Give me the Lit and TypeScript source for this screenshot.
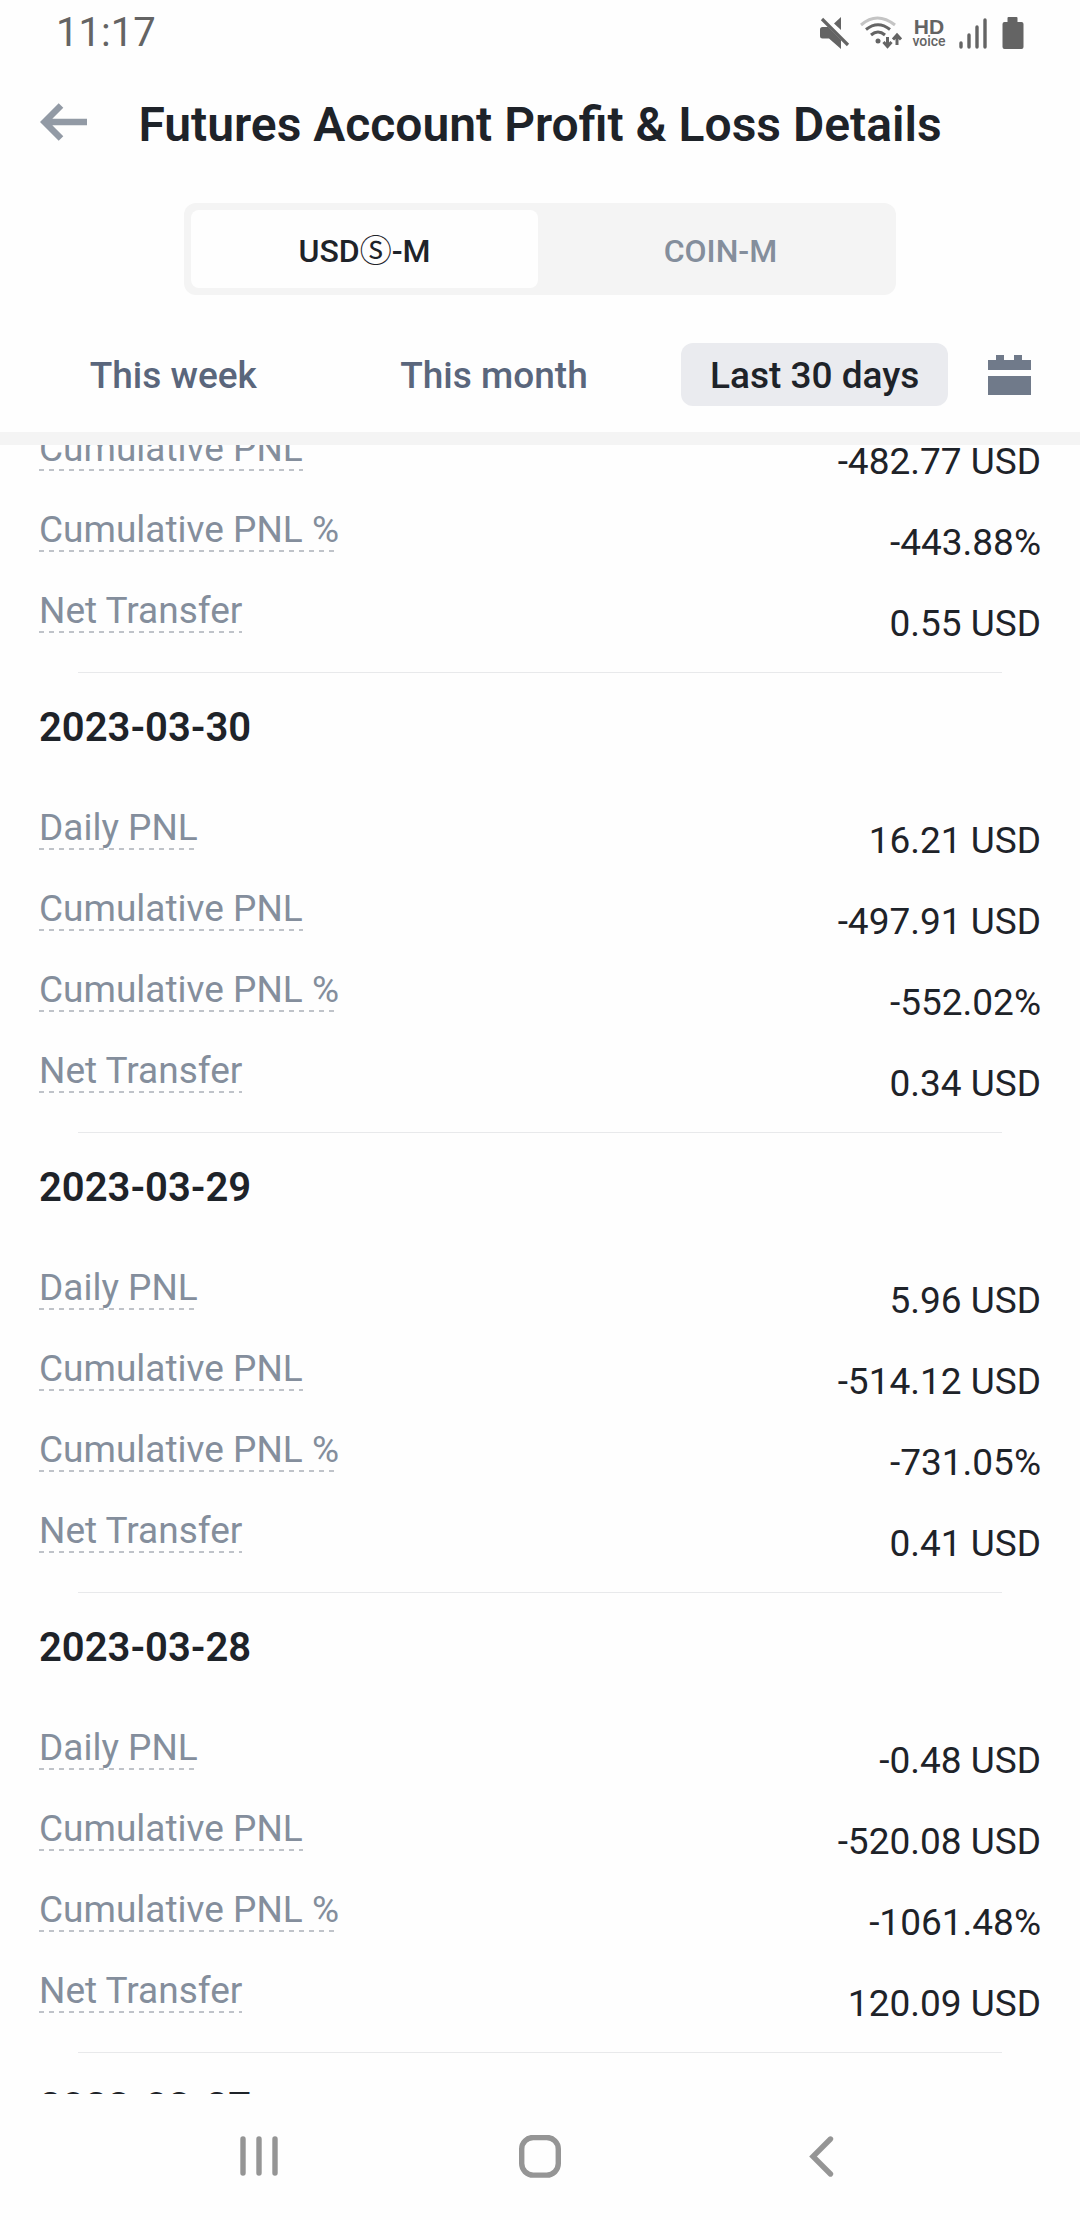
import { LitElement, html, css, svg } from "lit";
import { customElement, property, state } from "lit/decorators.js";
import { classMap } from "lit/directives/class-map.js";

interface Metric {
  label: string;
  value: string;
}

interface DayReport {
  date?: string;
  metrics: Metric[];
}

const metric = (label: string, value: string): Metric => ({ label, value });

const REPORTS: DayReport[] = [
  {
    metrics: [
      metric("Cumulative PNL", "-482.77 USD"),
      metric("Cumulative PNL %", "-443.88%"),
      metric("Net Transfer", "0.55 USD"),
    ],
  },
  {
    date: "2023-03-30",
    metrics: [
      metric("Daily PNL", "16.21 USD"),
      metric("Cumulative PNL", "-497.91 USD"),
      metric("Cumulative PNL %", "-552.02%"),
      metric("Net Transfer", "0.34 USD"),
    ],
  },
  {
    date: "2023-03-29",
    metrics: [
      metric("Daily PNL", "5.96 USD"),
      metric("Cumulative PNL", "-514.12 USD"),
      metric("Cumulative PNL %", "-731.05%"),
      metric("Net Transfer", "0.41 USD"),
    ],
  },
  {
    date: "2023-03-28",
    metrics: [
      metric("Daily PNL", "-0.48 USD"),
      metric("Cumulative PNL", "-520.08 USD"),
      metric("Cumulative PNL %", "-1061.48%"),
      metric("Net Transfer", "120.09 USD"),
    ],
  },
  { date: "2023-03-27", metrics: [] },
];

const buttonReset = css`
  button {
    box-sizing: border-box;
    border: 0;
    margin: 0;
    padding: 0;
    background: none;
    color: inherit;
    font: inherit;
    cursor: pointer;
  }
  svg {
    display: block;
    flex: none;
  }
`;

@customElement("status-bar")
export class StatusBar extends LitElement {
  static styles = css`
    :host {
      display: flex;
      align-items: center;
      justify-content: space-between;
      height: 66px;
      padding: 0 56px;
      color: #646464;
    }
    .time {
      font-size: 40px;
      line-height: 66px;
    }
    .icons {
      display: flex;
      align-items: center;
      gap: 10px;
    }
    svg {
      display: block;
    }
    .hd {
      display: flex;
      flex-direction: column;
      align-items: center;
      width: 34px;
    }
    .hd-top {
      font: 700 21px/17px "Liberation Sans", sans-serif;
    }
    .hd-bottom {
      font-size: 14px;
      font-weight: 500;
      line-height: 13px;
    }
  `;

  render() {
    return html`
      <span class="time">11:17</span>
      <div class="icons">
        <svg width="30" height="34" viewBox="0 0 30 34" role="img" aria-label="Muted">
          <path
            d="M0 13.500Q0 11 2.500 11H8L21 24V33L9 22.500H2.500Q0 22.500 0 20Z"
            fill="currentColor"
          />
          <path d="M21 1V14L14 7.500Z" fill="currentColor" />
          <path d="M2 3L28 29" stroke="currentColor" stroke-width="3.200" />
        </svg>
        <svg width="42" height="34" viewBox="0 0 42 34" role="img" aria-label="Wi-Fi">
          <g fill="none" stroke="currentColor" stroke-width="3">
            <path d="M1 9Q17 -5 35 9" stroke="#c4c4c4" />
            <path d="M6 13.500Q18 4 30 13.500" />
            <path d="M11 19Q18 13 25 19" />
            <path d="M27.500 21V30M23.500 26L27.500 30.500L31.500 26" />
            <path d="M37 29V20M33 23.500L37 19L41 23.500" />
          </g>
          <circle cx="18" cy="25" r="2.500" fill="currentColor" />
        </svg>
        <span class="hd">
          <span class="hd-top">HD</span>
          <span class="hd-bottom">voice</span>
        </span>
        <svg width="32" height="34" viewBox="0 0 32 34" role="img" aria-label="Signal">
          <path
            d="M5 27V31M13 19V31M21 11V31M29 4V31"
            stroke="currentColor"
            stroke-width="3.400"
            stroke-linecap="round"
          />
        </svg>
        <svg width="26" height="34" viewBox="0 0 26 34" role="img" aria-label="Battery">
          <path
            d="M10.500 1H18.500Q19.500 1 19.500 2V6H23.500Q25.500 6 25.500 8V31Q25.500 33 23.500 33H6.500Q4.500 33 4.500 31V8Q4.500 6 6.500 6H9.500V2Q9.500 1 10.500 1Z"
            fill="currentColor"
          />
        </svg>
      </div>
    `;
  }
}

@customElement("day-report")
export class DayReportView extends LitElement {
  @property({ attribute: false }) report!: DayReport;

  static styles = css`
    :host {
      display: block;
      padding: 0 39px;
    }
    .date {
      margin: 0;
      padding: 31px 0 54px;
      color: #1e2329;
      font-size: 40px;
      font-weight: 600;
      line-height: 48px;
    }
    .metrics {
      display: flex;
      flex-direction: column;
      gap: 24px;
      margin: 0;
      padding-bottom: 26px;
      font-size: 37px;
      line-height: 44px;
    }
    .row {
      display: flex;
      align-items: flex-start;
      justify-content: space-between;
    }
    .label {
      color: #848e9c;
      background: repeating-linear-gradient(90deg, #bfc3c9 0 5px, transparent 5px 10px)
        left bottom / 100% 2px no-repeat;
    }
    .value {
      margin: 0;
      padding-top: 13px;
      color: #1e2329;
    }
    .rule {
      height: 1px;
      margin: 0 39px;
      border: 0;
      background: #e8e9eb;
    }
  `;

  render() {
    const { date, metrics } = this.report;
    return html`
      ${date ? html`<h2 class="date">${date}</h2>` : null}
      ${metrics.length
        ? html`
            <dl class="metrics">
              ${metrics.map(
                (m) => html`
                  <div class="row">
                    <dt class="label">${m.label}</dt>
                    <dd class="value">${m.value}</dd>
                  </div>
                `,
              )}
            </dl>
            <hr class="rule" />
          `
        : null}
    `;
  }
}

@customElement("system-nav")
export class SystemNav extends LitElement {
  static styles = [
    buttonReset,
    css`
      :host {
        display: grid;
        grid-template-columns: repeat(3, 1fr);
        height: 126px;
        padding: 0 11%;
        color: #959595;
      }
      .key {
        display: flex;
        align-items: center;
        justify-content: center;
      }
    `,
  ];

  private key(label: string, shape: unknown) {
    return html`
      <button class="key" aria-label=${label}>
        <svg
          width="44"
          height="44"
          viewBox="0 0 44 44"
          fill="none"
          stroke="currentColor"
          stroke-width="5.400"
          stroke-linecap="round"
        >
          ${shape}
        </svg>
      </button>
    `;
  }

  render() {
    return html`
      ${this.key("Recent apps", svg`<path d="M6 4V38M22 4V38M38 4V38" />`)}
      ${this.key("Home", svg`<rect x="3.700" y="2.500" width="36.600" height="37.600" rx="11.500" />`)}
      ${this.key("Back", svg`<path d="M31.500 4L14 21.500L31.500 39" />`)}
    `;
  }
}

@customElement("app-root")
export class AppRoot extends LitElement {
  @state() private market = 0;
  @state() private range = 2;

  static styles = [
    buttonReset,
    css`
      :host {
        display: flex;
        flex-direction: column;
        height: 100vh;
        background: #fefefe;
        color: #1e2329;
        font-family: Roboto, "Noto Sans CJK JP", sans-serif;
      }
      .header {
        display: grid;
        grid-template-columns: 48px 1fr 48px;
        align-items: start;
        padding: 29px 40px 48px;
      }
      .title {
        margin: 0;
        text-align: center;
        font-size: 48px;
        font-weight: 600;
        line-height: 60px;
        white-space: nowrap;
      }
      .markets {
        display: grid;
        grid-template-columns: 1fr 1fr;
        gap: 8px;
        align-self: center;
        box-sizing: border-box;
        width: 66%;
        padding: 7px 2px 7px 7px;
        border-radius: 12px;
        background: #f4f4f4;
      }
      .market {
        height: 78px;
        padding-top: 4px;
        border-radius: 8px;
        color: #848e9c;
        font-size: 32px;
        font-weight: 500;
        line-height: 40px;
      }
      .market.active {
        background: #fefefe;
        color: #1e2329;
      }
      .circled {
        font-family: "Noto Sans CJK JP", sans-serif;
        font-weight: 400;
        line-height: 0;
      }
      .filters {
        display: flex;
        align-items: center;
        padding: 48px 49px 26px 13px;
        border-bottom: 13px solid #f4f4f4;
      }
      .slot {
        display: flex;
        flex: 1;
        justify-content: center;
      }
      .range {
        height: 63px;
        padding: 2px 29px 0;
        border-radius: 12px;
        color: #5a667c;
        font-size: 37px;
        font-weight: 500;
        line-height: 44px;
        white-space: nowrap;
      }
      .range.active {
        background: #eaebef;
        color: #1e2329;
      }
      .calendar {
        margin-left: 13px;
        color: #707a8a;
      }
      .list {
        flex: 1;
        min-height: 0;
        overflow-y: auto;
        scrollbar-width: none;
      }
    `,
  ];

  firstUpdated() {
    const list = this.renderRoot.querySelector(".list");
    requestAnimationFrame(() => {
      if (list) list.scrollTop = 18;
    });
  }

  render() {
    const markets = [html`USD<span class="circled">Ⓢ</span>-M`, html`COIN-M`];
    const ranges = ["This week", "This month", "Last 30 days"];
    return html`
      <status-bar></status-bar>
      <header class="header">
        <button aria-label="Back">
          <svg width="48" height="54" viewBox="0 0 48 54" fill="none" stroke="#929aa5">
            <path d="M47 27H5M21 10.500L4.500 27L21 43.500" stroke-width="6.500" />
          </svg>
        </button>
        <h1 class="title">Futures Account Profit &amp; Loss Details</h1>
      </header>
      <div class="markets">
        ${markets.map(
          (label, i) => html`
            <button
              class=${classMap({ market: true, active: i === this.market })}
              aria-pressed=${i === this.market}
              @click=${() => (this.market = i)}
            >${label}</button>
          `,
        )}
      </div>
      <div class="filters">
        ${ranges.map(
          (label, i) => html`
            <div class="slot">
              <button
                class=${classMap({ range: true, active: i === this.range })}
                aria-pressed=${i === this.range}
                @click=${() => (this.range = i)}
              >${label}</button>
            </div>
          `,
        )}
        <button class="calendar" aria-label="Choose dates">
          <svg width="43" height="42" viewBox="0 0 43 42" fill="currentColor">
            <path d="M0 6H8V1H16V6H26V1H34V6H43V16H0ZM0 22H43V41H0Z" />
          </svg>
        </button>
      </div>
      <main class="list">
        ${REPORTS.map((r) => html`<day-report .report=${r}></day-report>`)}
      </main>
      <system-nav></system-nav>
    `;
  }
}
